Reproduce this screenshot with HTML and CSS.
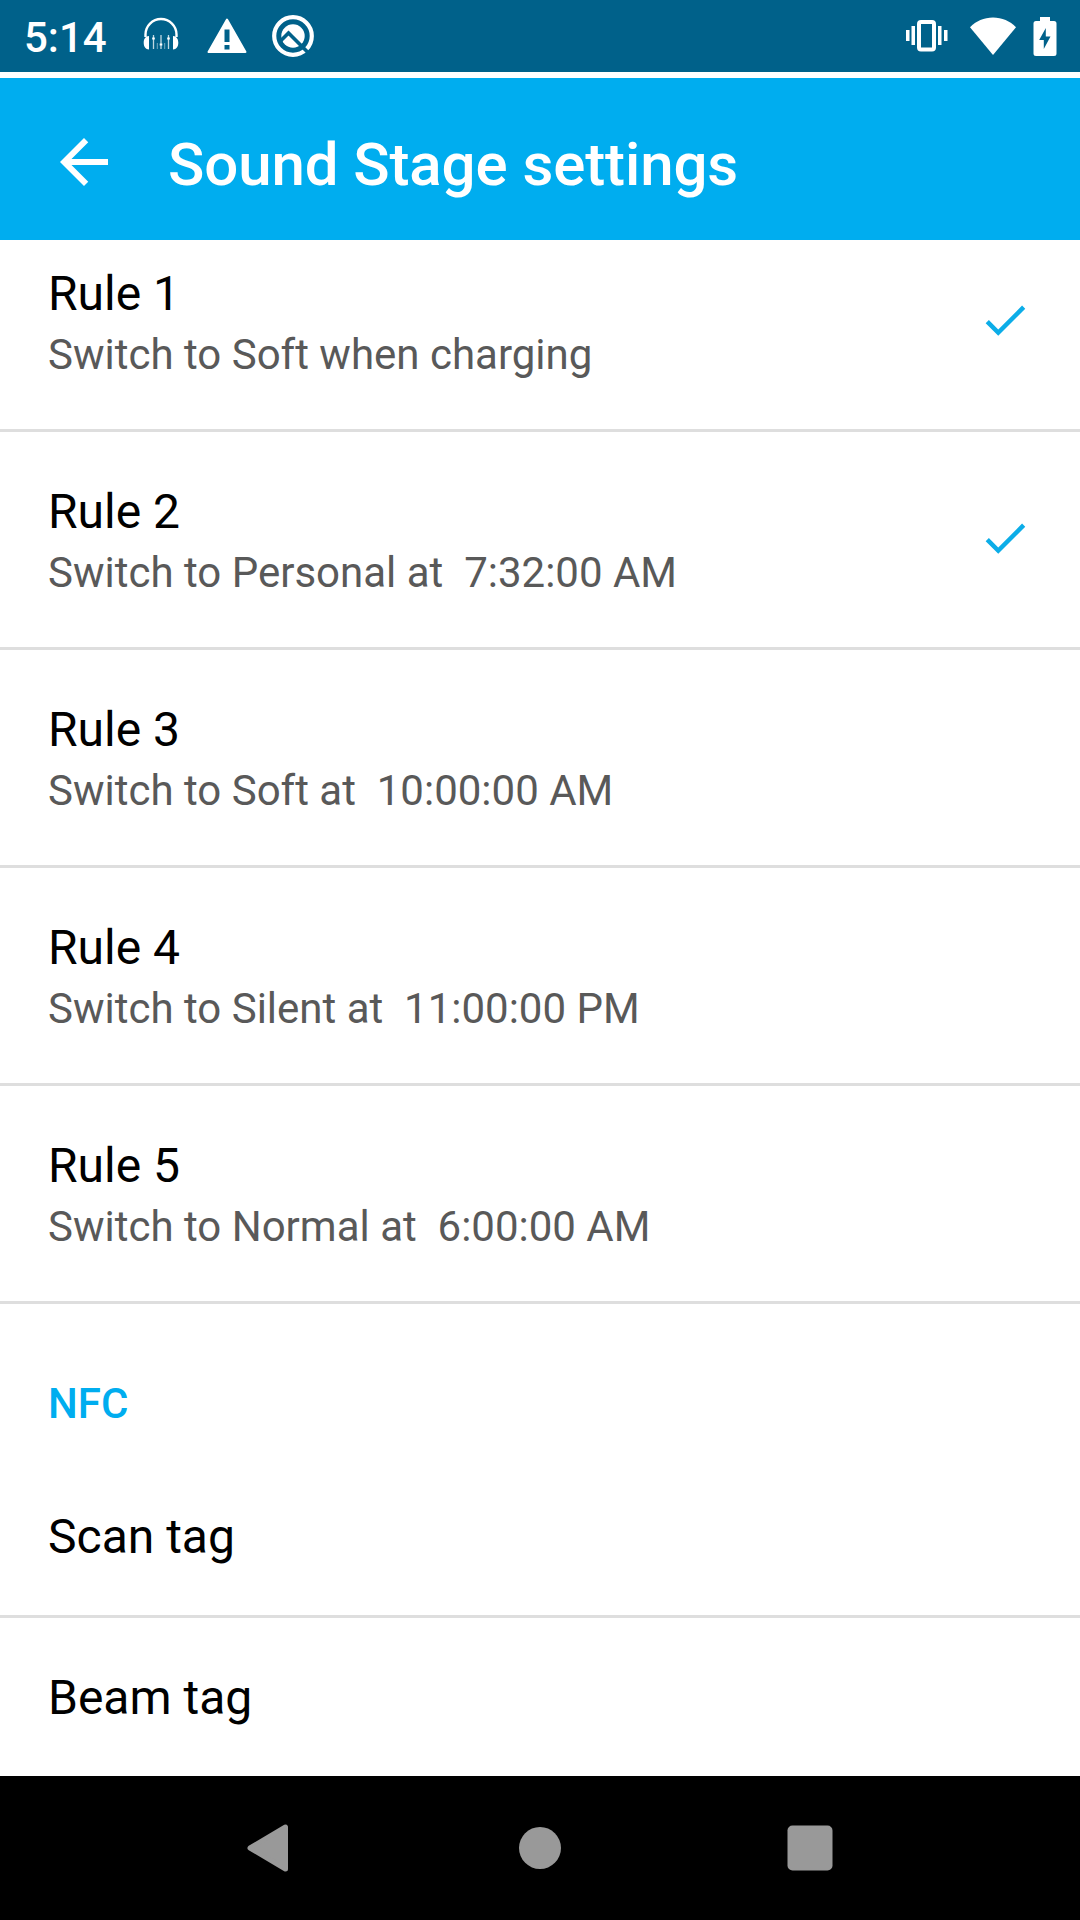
FILE: index.html
```html
<!DOCTYPE html>
<html lang="en">
<head>
  <meta charset="UTF-8">
  <meta name="viewport" content="width=device-width, initial-scale=1.0">
  <title>Sound Stage settings</title>
  <link rel="stylesheet" href="styles.css">
</head>
<body>
  <div class="screen">
    <div class="status-bar">
      <div class="status-left">
        <span class="clock">5:14</span>
        <svg class="icon-headphones" width="36" height="36" viewBox="0 0 36 36">
          <path d="M2.500 20V17.500a15.500 15.500 0 0 1 31 0V20" fill="none" stroke="#fff" stroke-width="2.400"/>
          <path d="M6 19v13.500c-3.500 0-5.300-3-5.300-6.750S2.500 19 6 19zM30 19v13.500c3.500 0 5.300-3 5.300-6.750S33.500 19 30 19z" fill="#fff"/>
          <path d="M10.500 18v14M18 18v14M25.500 18v14" stroke="#fff" stroke-width="1.300" opacity=".75"/>
          <path d="M14.300 26v6M21.700 26v6" stroke="#fff" stroke-width="1" opacity=".45"/>
          <path d="M9.200 21.500h2.600M16.700 27.500h2.600M24.200 21.500h2.600" stroke="#fff" stroke-width="2.200"/>
        </svg>
        <svg class="icon-warning" width="40" height="36" viewBox="0 0 40 36">
          <path d="M20 1.500L38.500 34H1.500z" fill="#fff" stroke="#fff" stroke-width="2" stroke-linejoin="round"/>
          <path d="M17.500 11.500h5V24h-5zM17.500 27h5v4.500h-5z" fill="#00618a"/>
        </svg>
        <svg class="icon-q" width="44" height="44" viewBox="0 0 44 44">
          <circle cx="22" cy="22" r="18.800" fill="none" stroke="#fff" stroke-width="4.200"/>
          <circle cx="22" cy="22" r="11.700" fill="#fff"/>
          <path d="M9 27.500L17.500 19L38 39.500" fill="none" stroke="#00618a" stroke-width="3.600"/>
        </svg>
      </div>
      <div class="status-right">
        <svg width="42" height="32" viewBox="0 0 42 32">
          <rect x="13" y="2" width="15" height="27.500" rx="2" fill="none" stroke="#fff" stroke-width="4"/>
          <path d="M0 10h3.500v11H0zM5.500 6h3.500v19H5.500zM32 6h3.500v19H32zM38 10h3.500v11H38z" fill="#fff"/>
        </svg>
        <svg class="icon-wifi" width="46" height="38" viewBox="0 0 46 38">
          <path d="M23 38L0 10.200C6 4 14 .5 23 .5S40 4 46 10.200z" fill="#fff"/>
        </svg>
        <svg class="icon-battery" width="24" height="39" viewBox="0 0 24 39">
          <path d="M7 0h10v4h4a2.500 2.500 0 0 1 2.500 2.500v30A2.500 2.500 0 0 1 21 39H3a2.500 2.500 0 0 1-2.500-2.500v-30A2.500 2.500 0 0 1 3 4h4z" fill="#fff"/>
          <path d="M12.800 11v8.500H17.500L10.800 32v-9H6.200z" fill="#00618a"/>
        </svg>
      </div>
    </div>

    <div class="toolbar">
      <svg class="back" width="72" height="72" viewBox="0 0 24 24">
        <path d="M20 11H7.830l5.590-5.590L12 4l-8 8 8 8 1.410-1.410L7.830 13H20v-2z" fill="#fff"/>
      </svg>
      <h1>Sound Stage settings</h1>
    </div>

    <div class="content">
      <ul class="list">
        <li class="item first">
          <div class="text">
            <div class="title">Rule 1</div>
            <div class="summary">Switch to Soft when charging</div>
          </div>
          <svg class="check" viewBox="0 0 24 24"><path d="M9 16.170L4.830 12l-1.420 1.410L9 19 21 7l-1.410-1.410z"/></svg>
        </li>
        <li class="item">
          <div class="text">
            <div class="title">Rule 2</div>
            <div class="summary">Switch to Personal at  7:32:00 AM</div>
          </div>
          <svg class="check" viewBox="0 0 24 24"><path d="M9 16.170L4.830 12l-1.420 1.410L9 19 21 7l-1.410-1.410z"/></svg>
        </li>
        <li class="item">
          <div class="text">
            <div class="title">Rule 3</div>
            <div class="summary">Switch to Soft at  10:00:00 AM</div>
          </div>
        </li>
        <li class="item">
          <div class="text">
            <div class="title">Rule 4</div>
            <div class="summary">Switch to Silent at  11:00:00 PM</div>
          </div>
        </li>
        <li class="item">
          <div class="text">
            <div class="title">Rule 5</div>
            <div class="summary">Switch to Normal at  6:00:00 AM</div>
          </div>
        </li>
      </ul>
      <h2>NFC</h2>
      <ul class="list">
        <li class="item single"><div class="title">Scan tag</div></li>
        <li class="item single"><div class="title">Beam tag</div></li>
      </ul>
    </div>

    <div class="nav-bar">
      <svg width="48" height="48" viewBox="0 0 48 48"><path d="M4 24L39.500 3v42z" stroke-width="5" stroke-linejoin="round"/></svg>
      <svg width="48" height="48" viewBox="0 0 48 48"><circle cx="24" cy="24" r="21"/></svg>
      <svg width="48" height="48" viewBox="0 0 48 48"><rect x="1.500" y="1.500" width="45" height="45" rx="5"/></svg>
    </div>
  </div>
</body>
</html>
```

FILE: styles.css
```css
* {
  box-sizing: border-box;
  margin: 0;
  padding: 0;
}

body {
  font-family: Roboto, sans-serif;
  background-color: #fff;
  color: #000;
}

svg {
  display: block;
  flex: none;
}

.screen {
  width: 1080px;
  height: 1920px;
  display: flex;
  flex-direction: column;
  overflow: hidden;
}

.status-bar {
  height: 72px;
  flex: none;
  display: flex;
  justify-content: space-between;
  padding: 0 23px 0 24px;
  background-color: #00618a;
}

.status-left,
.status-right {
  display: flex;
  align-items: center;
}

.clock {
  width: 119px;
  padding-top: 4px;
  font-size: 42px;
  font-weight: 500;
  line-height: 50px;
  color: #fff;
}

.icon-headphones {
  margin-bottom: 2px;
}

.icon-warning {
  margin-left: 28px;
}

.icon-q {
  margin-left: 24px;
}

.icon-wifi {
  margin-left: 22px;
}

.icon-battery {
  margin-left: 17px;
}

/* white gap between the status bar and the toolbar */
.toolbar {
  height: 162px;
  flex: none;
  display: flex;
  align-items: center;
  margin-top: 6px;
  padding: 6px 48px 0;
  background-color: #00adef;
}

.toolbar h1 {
  margin-left: 48px;
  font-size: 60px;
  font-weight: 500;
  line-height: 70px;
  letter-spacing: -0.1px;
  padding-top: 6px;
  color: #fff;
}

.content {
  flex: 1;
  min-height: 0;
  overflow: hidden;
}

.list {
  list-style: none;
}

.item {
  height: 218px;
  display: flex;
  justify-content: space-between;
  padding: 52px 48px 0;
  border-bottom: 3px solid #dedede;
}

/* list is scrolled a little */
.item.first {
  margin-top: -26px;
}

.item.single {
  height: 161px;
}

.title {
  font-size: 48px;
  line-height: 56px;
}

.summary {
  margin-top: 8px;
  font-size: 42px;
  line-height: 50px;
  color: #595959;
  white-space: pre;
}

.check {
  width: 54px;
  height: 54px;
  margin-top: 27px;
  fill: #0cade8;
}

h2 {
  height: 153px;
  padding: 75px 48px 0;
  font-size: 42px;
  font-weight: 500;
  line-height: 50px;
  color: #00adef;
}

.nav-bar {
  height: 144px;
  flex: none;
  display: flex;
  justify-content: center;
  align-items: center;
  gap: 222px;
  background-color: #000;
}

.nav-bar svg {
  fill: #999;
}

.nav-bar path {
  stroke: #999;
}
```
